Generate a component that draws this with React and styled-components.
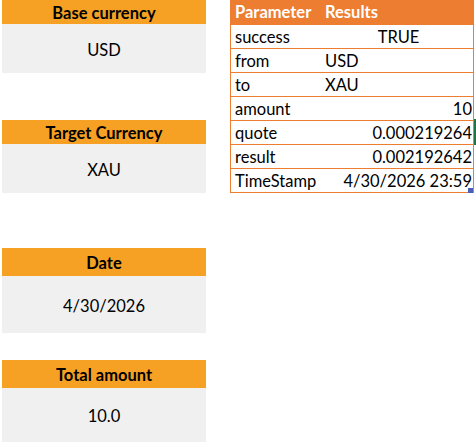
import React from "react";
import styled, { createGlobalStyle } from "styled-components";

const GlobalStyle = createGlobalStyle`
  body {
    margin: 0;
    background: #ffffff;
    font-family: Lato, "Open Sans", sans-serif;
    font-size: 16px;
    color: #000000;
  }
`;

const Sheet = styled.div`
  display: grid;
  grid-template-columns: 204px 244px;
  column-gap: 24px;
  align-items: start;
  padding-left: 2px;
  width: 476px;
  height: 442px;
  overflow: hidden;
`;

const InputColumn = styled.div`
  display: flex;
  flex-direction: column;
`;

const InputBlock = styled.div`
  display: flex;
  flex-direction: column;
  margin-top: ${(p) => p.$gap}px;
`;

const InputHeader = styled.div`
  height: ${(p) => p.$h}px;
  padding-top: 2px;
  box-sizing: border-box;
  background: #f6a024;
  font-weight: 700;
  font-size: 16.5px;
  display: flex;
  align-items: center;
  justify-content: center;
`;

const InputValue = styled.div`
  height: ${(p) => p.$h}px;
  padding-top: 2px;
  box-sizing: border-box;
  background: #f0f0f0;
  display: flex;
  align-items: center;
  justify-content: center;
  font-size: 16.5px;
`;

const ResultTable = styled.div`
  position: relative;
  border: 1px solid #ed7d31;
  border-top: none;
  font-size: 16.5px;
`;

const HeadRow = styled.div`
  display: grid;
  grid-template-columns: 90px 1fr;
  height: 24px;
  background: #ed7d31;
  color: #ffffff;
  font-weight: 700;
`;

const Row = styled.div`
  display: grid;
  grid-template-columns: 90px 1fr;
  height: 23px;
  border-top: 1px solid #ed7d31;
`;

const Cell = styled.div`
  padding: 2px 1px 0 4px;
  text-align: ${(p) => p.$align || "left"};
  white-space: nowrap;
  line-height: 21px;
`;

const FillHandle = styled.span`
  position: absolute;
  right: 0;
  bottom: -1px;
  width: 5px;
  height: 5px;
  background: #4a5fb5;
`;

const EdgeMark = styled.span`
  position: absolute;
  right: -3px;
  top: 119px;
  width: 2px;
  height: 26px;
  background: #217346;
`;

const inputs = [
  { label: "Base currency", value: "USD", gap: 0, head: 24, body: 49 },
  { label: "Target Currency", value: "XAU", gap: 47, head: 24, body: 49 },
  { label: "Date", value: "4/30/2026", gap: 55, head: 28, body: 57 },
  { label: "Total amount", value: "10.0", gap: 27, head: 28, body: 54 },
];

const results = [
  { key: "success", value: "TRUE", align: "center" },
  { key: "from", value: "USD", align: "left" },
  { key: "to", value: "XAU", align: "left" },
  { key: "amount", value: "10", align: "right" },
  { key: "quote", value: "0.000219264", align: "right" },
  { key: "result", value: "0.002192642", align: "right" },
  { key: "TimeStamp", value: "4/30/2026 23:59", align: "right" },
];

export default function App() {
  return (
    <>
      <GlobalStyle />
      <Sheet>
        <InputColumn>
          {inputs.map((item) => (
            <InputBlock key={item.label} $gap={item.gap}>
              <InputHeader $h={item.head}>{item.label}</InputHeader>
              <InputValue $h={item.body}>{item.value}</InputValue>
            </InputBlock>
          ))}
        </InputColumn>
        <ResultTable>
          <HeadRow>
            <Cell>Parameter</Cell>
            <Cell>Results</Cell>
          </HeadRow>
          {results.map((r) => (
            <Row key={r.key}>
              <Cell>{r.key}</Cell>
              <Cell $align={r.align}>{r.value}</Cell>
            </Row>
          ))}
          <EdgeMark />
          <FillHandle />
        </ResultTable>
      </Sheet>
    </>
  );
}
